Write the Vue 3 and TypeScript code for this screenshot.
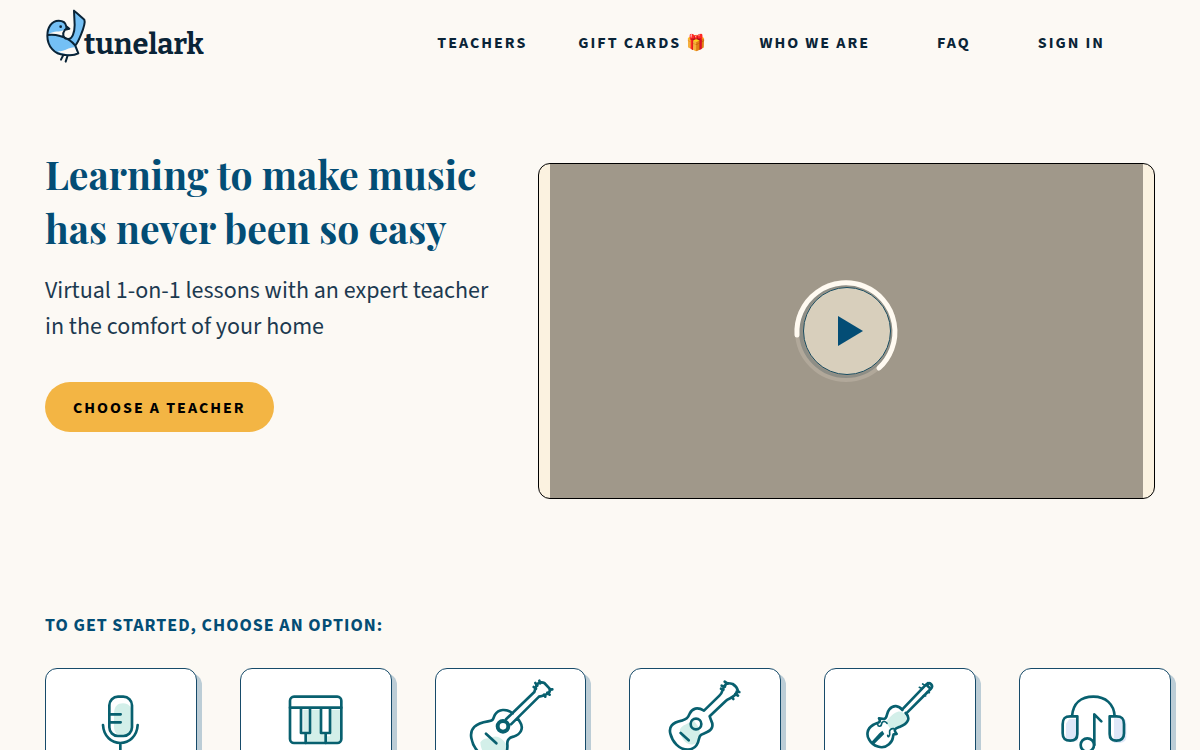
<script setup lang="ts">
interface NavLink {
  label: string
  href: string
  wide?: boolean
}

const links: NavLink[] = [
  { label: 'Teachers', href: '#teachers' },
  { label: 'Gift Cards 🎁', href: '#gift-cards' },
  { label: 'Who we are', href: '#about' },
  { label: 'FAQ', href: '#faq', wide: true },
  { label: 'Sign in', href: '#sign-in' },
]

const instruments: string[] = ['voice', 'piano', 'guitar', 'ukulele', 'violin', 'production']
</script>

<template>
  <div class="page">
    <header class="header">
      <a class="logo" href="#home">
        <svg class="bird" viewBox="30 27 126 162" aria-hidden="true">
          <path d="M117 32C131 43 140 52 148 59C151 66 145 87 138 104C132 119 127 129 121 137L99 117C112 111 119 97 119 75Z" fill="#74c0f5" />
          <path d="M38 103C37 82 49 63 71 62C85 62 92 69 94 79L103 86L90 89C86 98 84 104 85 109C91 116 105 121 113 115L121 137L130 160C121 165 103 167 87 164C58 162 36 139 37 108Z" fill="#74c0f5" />
          <path d="M43 101C58 92 72 97 87 90L84 107C72 106 57 102 43 101Z" fill="#fcf8f4" />
          <path d="M67 152C84 158 98 143 118 142L128 158C113 165 84 166 67 152Z" fill="#fcf8f4" />
          <path d="M117 32C131 43 140 52 148 59C151 66 145 87 138 104C132 119 127 129 121 137M117 32L119 75C119 97 112 118 99 117C83 117 81 101 90 89L103 86L94 79C92 68 83 62 71 62C50 62 37 82 37 107C37 139 59 164 87 164C103 167 121 165 130 160L121 137C108 120 93 113 75 108C62 104 50 103 38 105M85 165L78 179M98 166L92 185" fill="none" stroke="#0a2437" stroke-width="6" stroke-linejoin="round" stroke-linecap="round" />
          <path d="M92 78L106 86L90 90Z" fill="#0a2437" />
          <circle cx="77" cy="80" r="4" fill="#0a2437" />
        </svg>
        <span class="wordmark">tunelark</span>
      </a>
      <nav class="nav" aria-label="Main">
        <a v-for="link in links" :key="link.label" :href="link.href" :class="{ wide: link.wide }">{{ link.label }}</a>
      </nav>
    </header>

    <main>
      <section class="hero">
        <div class="intro">
          <h1>Learning to make music<br />has never been so easy</h1>
          <p>Virtual 1-on-1 lessons with an expert teacher<br />in the comfort of your home</p>
          <button class="cta" type="button">Choose a teacher</button>
        </div>
        <div class="video">
          <div class="screen">
            <button class="play" type="button" aria-label="Play video">
              <svg viewBox="-53 -54 108 108" aria-hidden="true">
                <circle r="47" cx="1" fill="none" stroke="#8e8e86" stroke-width="5" />
                <circle r="49" fill="none" stroke="#b1a89a" stroke-width="4" />
                <path d="M-49 4A49 49 0 1 1 33 37" fill="none" stroke="#fffaf1" stroke-width="5" stroke-linecap="round" />
                <circle cx="1" r="43.5" fill="#d8cfbc" stroke="#174b60" />
                <path d="M-8 -15L17 0L-8 15Z" fill="#034d75" />
              </svg>
            </button>
          </div>
        </div>
      </section>

      <section class="options">
        <h2>To get started, choose an option:</h2>
        <div class="cards">
          <a v-for="name in instruments" :key="name" class="card" :href="'#' + name" :aria-label="name">
            <svg viewBox="33 42 450 450" aria-hidden="true">
              <g v-if="name === 'voice'">
                <path class="mint" d="M237 178C237 153 248 145 264 145C283 145 291 158 291 178V218C291 235 282 243 268 243C248 243 237 234 237 216Z" />
                <rect x="223" y="125" width="68" height="118" rx="26" />
                <path d="M223 178H257M223 202H257M204 210C206 244 230 264 256 264C282 264 306 244 308 210M256 264V330M225 330H287" />
              </g>
              <g v-else-if="name === 'piano'">
                <path class="mint" d="M220 164H235V234H220ZM244 164H270V230L287 244H300V164H331V261H230V238H244Z" />
                <rect x="180" y="125" width="154" height="139" rx="12" />
                <path d="M180 158H334M213 160V234H240V160M273 160V234H300V160M227 234V264M287 234V264" />
              </g>
              <g v-else-if="name === 'guitar'">
                <path class="mint" d="M166 262C177 246 191 252 203 246C218 239 236 253 244 268C244 291 232 305 207 307C184 305 168 293 166 262Z" />
                <path d="M263 175C244 160 220 162 210 179C202 195 207 196 189 199C151 205 134 221 139 249C145 282 171 311 207 313C239 312 249 294 247 267C246 254 251 248 265 245C288 238 297 219 285 201L278 190M243 193L328 111M258 208L342 125M328 111L335 89C340 82 351 81 358 84L376 103C375 114 367 119 342 125M183 236L214 265" />
                <circle cx="234" cy="214" r="16" stroke-width="12" />
                <path d="M346 85L343 77M337 92L331 84M333 101L326 96M374 104L382 103M367 113L374 119M357 119L361 125" />
              </g>
              <g v-else-if="name === 'ukulele'">
                <path class="mint" d="M182 226C189 204 211 212 219 191C230 202 244 220 243 235C231 248 248 257 224 268C202 273 186 251 182 226Z" />
                <path d="M255 167C235 155 220 160 212 176C206 190 203 192 188 197C159 203 149 216 154 236C160 260 179 284 207 284C231 282 237 267 240 251C243 237 250 238 263 232C280 225 284 211 277 198L272 184L321 137C331 128 345 130 357 108C355 100 348 91 341 87C332 84 325 85 324 85C310 93 313 112 302 121L255 167M185 234L209 256" />
                <circle cx="231" cy="207" r="16" />
                <path d="M326 86L317 80M318 95L308 92M313 104L306 101M353 110L361 111M349 117L357 122M339 127L343 132" />
              </g>
              <g v-else-if="name === 'violin'">
                <path class="mint" d="M221 194C243 169 254 167 264 171C280 178 282 204 265 213C252 220 239 218 230 222C224 213 212 203 221 194Z" />
                <path d="M265 165C254 151 238 149 226 163C215 176 222 188 211 192L195 190C203 205 190 202 177 210C157 222 158 242 165 253C176 273 205 286 225 268C240 255 235 247 239 238L248 237C236 222 245 220 258 215C283 206 290 189 275 174" />
                <path d="M265 163L336 89C348 78 360 92 350 102L277 175" />
                <path d="M338 90L349 101" />
                <path d="M170 263L196 235L205 227L211 237L180 268Z" fill="#08606f" stroke="none" />
                <path class="fine" d="M191 208C192 216 202 216 203 206C205 197 214 198 219 205M221 241C221 249 229 243 227 234C225 225 231 220 239 221M325 101L316 97M334 92L326 87M338 112L346 113M328 122L335 123M344 88L341 83" />
              </g>
              <g v-else>
                <path class="lilac" d="M181 192H206V259H180C172 255 169 247 171 234V206ZM315 190H341C351 190 353 203 352 216V246C351 264 336 264 315 264Z" />
                <path d="M189 184C192 144 217 125 253 125C290 125 315 147 317 184M205 184H184C167 184 161 191 161 208V235C161 252 169 257 184 257C200 257 205 250 205 237ZM302 184H322C339 184 345 191 345 208V235C345 251 337 257 322 257C307 257 302 250 302 237ZM256 270V178L277 199" />
                <circle cx="235" cy="270" r="20" />
              </g>
            </svg>
          </a>
        </div>
      </section>
    </main>
  </div>
</template>

<style>
body {
  margin: 0;
  background: #fcf9f4;
}
</style>

<style scoped>
.page {
  height: 100vh;
  overflow: hidden;
  color: #0a2437;
  font-family: "Source Sans 3", "Noto Sans CJK SC", "Noto Sans", sans-serif;
}

.header {
  display: flex;
  align-items: center;
  justify-content: space-between;
  height: 84px;
  padding: 0 95px 0 45px;
}

.logo {
  display: flex;
  align-items: center;
  height: 66px;
  margin-bottom: 12px;
  color: #0a2437;
  text-decoration: none;
}

.bird {
  flex: none;
  width: 42px;
  height: 54px;
}

.wordmark {
  margin: 18px 0 0 -3px;
  font: 700 29px/36px "Bitter", "DejaVu Serif Condensed", serif;
}

.nav {
  display: flex;
  gap: 51px;
  padding-top: 2px;
}

.nav a {
  color: #0a2437;
  font-size: 16px;
  font-weight: 700;
  line-height: 24px;
  letter-spacing: 2px;
  text-transform: uppercase;
  text-decoration: none;
  white-space: nowrap;
}

.nav .wide {
  margin: 0 16px;
}

.hero {
  display: grid;
  grid-template-columns: 4fr 5fr;
  padding: 63px 45px 0;
}

.intro {
  min-width: 0;
  white-space: nowrap;
}

h1 {
  margin: 0;
  color: #034d75;
  font: bold 39px/54px "Playfair Display", "Liberation Serif", serif;
}

p {
  margin: 18px 0 37px;
  color: #1c3a50;
  font-size: 24px;
  line-height: 36px;
}

.cta {
  height: 50px;
  padding: 2px 28px 0;
  border: 0;
  border-radius: 25px;
  background: #f3b544;
  color: #000;
  font: 700 16px/24px "Source Sans 3", "Noto Sans CJK SC", "Noto Sans", sans-serif;
  letter-spacing: 2px;
  text-transform: uppercase;
}

.video {
  box-sizing: border-box;
  height: 336px;
  margin-top: 16px;
  padding: 0 11px;
  overflow: hidden;
  border: 1px solid #000;
  border-radius: 12px;
  background: #fbf2e0;
}

.screen {
  display: grid;
  place-items: center;
  height: 100%;
  background: #a0988a;
}

.play {
  width: 108px;
  height: 108px;
  padding: 0;
  border: 0;
  border-radius: 50%;
  background: none;
}

.play svg {
  display: block;
}

.options {
  padding: 113px 29px 0 45px;
}

h2 {
  margin: 0 0 28px;
  color: #034d75;
  font-size: 18px;
  font-weight: 700;
  line-height: 28px;
  letter-spacing: 1px;
  text-transform: uppercase;
}

.cards {
  display: grid;
  grid-template-columns: repeat(6, 1fr);
  gap: 43px;
}

.card {
  display: flex;
  justify-content: center;
  min-width: 0;
  border: 1px solid #174b6a;
  border-radius: 12px;
  background: #fff;
  box-shadow: 5px 5px 0 #bccdd6;
}

.card svg {
  flex: none;
  width: 150px;
  height: 150px;
  fill: none;
  stroke: #08606f;
  stroke-width: 8;
  stroke-linecap: round;
  stroke-linejoin: round;
}

.card .mint {
  fill: #d3efe9;
  stroke: none;
}

.card .lilac {
  fill: #dfe7f8;
  stroke: none;
}

.card .fine {
  stroke-width: 5;
}
</style>
